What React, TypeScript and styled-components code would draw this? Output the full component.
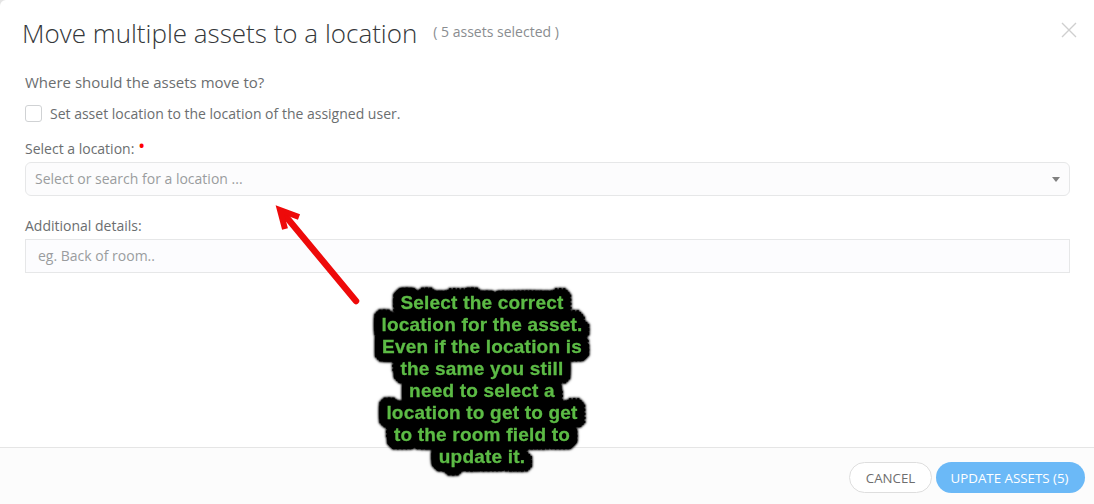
import styled, { createGlobalStyle } from 'styled-components'

const GlobalStyle = createGlobalStyle`
  html, body {
    margin: 0;
    padding: 0;
    background: #e4e4e4;
  }
`

const Page = styled.div`
  position: relative;
  width: 1094px;
  height: 504px;
  overflow: hidden;
  background: #ffffff;
  font-family: 'Open Sans', sans-serif;
  color: #676a6c;
  display: flex;
  flex-direction: column;
  border-top-left-radius: 6px;
`

const Header = styled.div`
  display: flex;
  align-items: flex-start;
  height: 66px;
  padding: 15px 25px 0 22px;
  box-sizing: border-box;
`

const Title = styled.h4`
  margin: 0;
  font-size: 26px;
  line-height: 36px;
  font-weight: 300;
  color: #34373a;
`

const Subtitle = styled.span`
  margin: 7px 0 0 16px;
  font-size: 14px;
  line-height: 20px;
  font-weight: 400;
  color: #8a8d90;
`

const CloseButton = styled.button`
  position: absolute;
  top: 22px;
  right: 17px;
  width: 16px;
  height: 16px;
  padding: 0;
  border: none;
  background: none;
  color: #cfcfcf;
  display: flex;
`

const Body = styled.div`
  flex: 1;
  padding: 5px 24px 0 25px;
`

const Question = styled.p`
  margin: 0 0 9px;
  font-size: 15px;
  line-height: 22px;
  color: #6b6e70;
`

const CheckRow = styled.label`
  display: flex;
  align-items: center;
  gap: 8px;
  height: 22px;
  font-size: 14px;
  color: #6b6e70;
  margin-bottom: 15px;
`

const Checkbox = styled.span`
  width: 15px;
  height: 15px;
  border: 1px solid #d0d2d4;
  border-radius: 3px;
  background: #fff;
`

const FieldLabel = styled.label`
  display: block;
  font-size: 14px;
  line-height: 20px;
  color: #6b6e70;
  margin-bottom: 3px;
`

const Required = styled.span`
  color: #ff0000;
  font-size: 14px;
  font-weight: 700;
  margin-left: 1px;
  vertical-align: 3px;
  line-height: 1;
`

const Select = styled.div`
  display: flex;
  align-items: center;
  justify-content: space-between;
  height: 34px;
  box-sizing: border-box;
  padding: 0 9px 2px 9px;
  background: #fcfcfd;
  border: 1px solid #e6e7e8;
  border-radius: 6px;
  font-size: 14px;
  color: #9a9c9e;
  margin-bottom: 20px;
`

const Caret = styled.span`
  width: 0;
  height: 0;
  margin-top: 2px;
  border-left: 4px solid transparent;
  border-right: 4px solid transparent;
  border-top: 5px solid #808080;
`

const TextInput = styled.div`
  height: 34px;
  box-sizing: border-box;
  display: flex;
  align-items: center;
  padding: 0 12px 2px;
  background: #fcfcfe;
  border: 1px solid #e6e7e8;
  font-size: 14px;
  color: #9a9c9e;
`

const Footer = styled.div`
  height: 57px;
  box-sizing: border-box;
  border-top: 1px solid #e5e5e5;
  background: #fcfcfc;
  display: flex;
  justify-content: flex-end;
  align-items: center;
  gap: 4px;
  padding: 3px 9px 0 0;
`

const Button = styled.button<{ $primary?: boolean }>`
  height: 31px;
  box-sizing: border-box;
  border-radius: 16px;
  font-family: inherit;
  font-size: 13.3px;
  padding: ${(p) => (p.$primary ? '0 2px 0 0' : '0')};
  border: ${(p) => (p.$primary ? 'none' : '1px solid #dedede')};
  background: ${(p) => (p.$primary ? '#6bb9f7' : '#ffffff')};
  color: ${(p) => (p.$primary ? '#ffffff' : '#6e6e6e')};
  width: ${(p) => (p.$primary ? '149px' : '83px')};
`

const Arrow = styled.svg`
  position: absolute;
  left: 270px;
  top: 200px;
`

// the outline is a stack of drop shadows so one line's outline never covers the line above
const Callout = styled.div`
  position: absolute;
  left: 362px;
  top: 292px;
  width: 240px;
  text-align: center;
  font-family: 'Liberation Sans', sans-serif;
  font-size: 19px;
  letter-spacing: 0.2px;
  line-height: 22px;
  font-weight: 700;
  color: #5cbb45;
  -webkit-text-stroke: 0.3px #5cbb45;
  filter: drop-shadow(4px 0 0 #000) drop-shadow(-4px 0 0 #000) drop-shadow(0 4px 0 #000)
    drop-shadow(0 -4px 0 #000) drop-shadow(2px 2px 0 #000) drop-shadow(-2px 2px 0 #000)
    drop-shadow(2px -2px 0 #000) drop-shadow(-2px -2px 0 #000) drop-shadow(0 0 1px #000)
    drop-shadow(0 0 1px #000);
`

export default function App() {
  return (
    <>
      <GlobalStyle />
      <Page>
        <Header>
          <Title>Move multiple assets to a location</Title>
          <Subtitle>( 5 assets selected )</Subtitle>
        </Header>
        <CloseButton aria-label="Close">
          <svg width="16" height="16" viewBox="0 0 16 16" fill="none" stroke="currentColor" strokeWidth="1.4">
            <path d="M1 1L15 15M15 1L1 15" />
          </svg>
        </CloseButton>
        <Body>
          <Question>Where should the assets move to?</Question>
          <CheckRow>
            <Checkbox />
            Set asset location to the location of the assigned user.
          </CheckRow>
          <FieldLabel>
            Select a location: <Required>•</Required>
          </FieldLabel>
          <Select>
            Select or search for a location ...
            <Caret />
          </Select>
          <FieldLabel>Additional details:</FieldLabel>
          <TextInput>eg. Back of room..</TextInput>
        </Body>
        <Footer>
          <Button>CANCEL</Button>
          <Button $primary>UPDATE ASSETS (5)</Button>
        </Footer>
        <Arrow width="100" height="115" viewBox="0 0 100 115" fill="none" stroke="#ee0a0a" strokeWidth="6.5" strokeLinecap="round">
          <path d="M86 101L13 13" />
          <path d="M29 17L10 10L15 29" strokeWidth="6" strokeLinecap="butt" />
        </Arrow>
        <Callout>
          Select the correct
          <br />
          location for the asset.
          <br />
          Even if the location is
          <br />
          the same you still
          <br />
          need to select a
          <br />
          location to get to get
          <br />
          to the room field to
          <br />
          update it.
        </Callout>
      </Page>
    </>
  )
}
